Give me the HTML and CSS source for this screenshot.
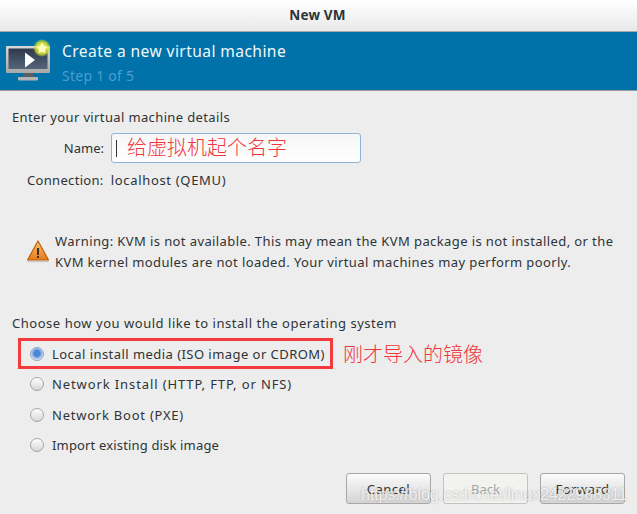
FILE: index.html
```html
<!DOCTYPE html>
<html lang="en">
<head>
<meta charset="utf-8">
<title>New VM</title>
<link rel="stylesheet" href="styles.css">
</head>
<body>
<div class="window">
  <header class="titlebar">New VM</header>
  <section class="banner">
    <svg class="vm-icon" width="50" height="50" viewBox="0 0 50 50">
      <defs>
        <radialGradient id="glow"><stop offset="0.35" stop-color="#f4f34a"/><stop offset="0.75" stop-color="#d5e02c" stop-opacity="0.75"/><stop offset="1" stop-color="#c8dc30" stop-opacity="0"/></radialGradient>
        <linearGradient id="screen" x1="0" y1="0" x2="0" y2="1"><stop offset="0" stop-color="#2d3a4b"/><stop offset="1" stop-color="#56657a"/></linearGradient>
        <linearGradient id="bezel" x1="0" y1="0" x2="0" y2="1"><stop offset="0" stop-color="#d8d8d6"/><stop offset="1" stop-color="#a9a9a7"/></linearGradient>
      </defs>
      <rect x="6" y="14" width="44" height="27" rx="1" fill="url(#bezel)"/>
      <rect x="8.5" y="16.5" width="39" height="20.5" fill="url(#screen)"/>
      <rect x="23" y="41" width="10" height="4" fill="#5c5f60"/>
      <rect x="18" y="45" width="20" height="3.5" rx="1" fill="#b4b4b2"/>
      <path d="M25 20.5 L35 28 L25 35.5 Z" fill="#fff"/>
      <circle cx="42" cy="16" r="9" fill="url(#glow)"/>
      <path d="M42 10.5 l1.8 3.7 4 .5 -3 2.8 .8 4 -3.6 -2 -3.6 2 .8 -4 -3 -2.8 4 -.5 Z" fill="#fff9c8"/>
    </svg>
    <div class="banner-text">
      <div class="banner-title">Create a new virtual machine</div>
      <div class="banner-step">Step 1 of 5</div>
    </div>
  </section>
  <main class="content">
    <div class="heading">Enter your virtual machine details</div>
    <div class="name-row">
      <label class="name-label">Name:</label>
      <div class="name-input"><span class="caret"></span><span class="note note-name">给虚拟机起个名字</span></div>
    </div>
    <div class="conn-row"><span class="conn-label">Connection:</span><span class="conn-value">localhost (QEMU)</span></div>
    <div class="warning">
      <svg class="warn-icon" width="24" height="24" viewBox="0 0 24 24">
        <defs><linearGradient id="warn" x1="0" y1="0" x2="0" y2="1"><stop offset="0" stop-color="#fbc26a"/><stop offset="1" stop-color="#e8791a"/></linearGradient></defs>
        <path d="M1.5 22.5 H22.5" stroke="#c9c9c9" stroke-width="1.5"/>
        <path d="M12 2 L22.5 21 H1.5 Z" fill="url(#warn)" stroke="#b9600f" stroke-width="1.2" stroke-linejoin="round"/>
        <rect x="11" y="9" width="2" height="7" fill="#3a3128"/>
        <rect x="11" y="17" width="2" height="2" fill="#3a3128"/>
      </svg>
      <p class="warn-text">Warning: KVM is not available. This may mean the KVM package is not installed, or the<br>KVM kernel modules are not loaded. Your virtual machines may perform poorly.</p>
    </div>
    <div class="heading choose">Choose how you would like to install the operating system</div>
    <div class="options">
      <div class="selected-line">
        <div class="option selected"><span class="radio on"></span>Local install media (ISO image or CDROM)</div>
        <span class="note note-media">刚才导入的镜像</span>
      </div>
      <div class="option opt-network"><span class="radio"></span>Network Install (HTTP, FTP, or NFS)</div>
      <div class="option opt-boot"><span class="radio"></span>Network Boot (PXE)</div>
      <div class="option opt-import"><span class="radio"></span>Import existing disk image</div>
    </div>
  </main>
  <footer class="buttons">
    <button class="btn">Cancel</button>
    <button class="btn disabled">Back</button>
    <button class="btn">Forward</button>
  </footer>
  <div class="watermark">https://blog.csdn.net/linux2422988311</div>
</div>
</body>
</html>
```
FILE: styles.css
```css
* { box-sizing: border-box; }
html, body { margin: 0; padding: 0; }
body {
  width: 637px;
  height: 514px;
  overflow: hidden;
  font-family: "Noto Sans", "Open Sans", sans-serif;
  font-size: 13px;
  letter-spacing: 0.4px;
  color: #2e3436;
  background: #ededed;
}
.window {
  position: relative;
  width: 637px;
  height: 514px;
  display: flex;
  flex-direction: column;
}
.titlebar {
  height: 32px;
  flex: none;
  display: flex;
  align-items: center;
  justify-content: center;
  padding: 0 2px 2px 0;
  font-weight: 700;
  font-size: 13.5px;
  letter-spacing: 0.2px;
  color: #2e3436;
  background: linear-gradient(#ffffff, #e9e9e9);
  border-bottom: 1px solid #a9a9a9;
}
.banner {
  height: 59px;
  flex: none;
  display: flex;
  align-items: center;
  background: #0071a9;
  border-bottom: 1px solid #9a9a9a;
}
.vm-icon { flex: none; margin-top: -9px; }
.banner-text { margin: 4px 0 0 12px; }
.banner-title { font-size: 15.6px; line-height: 21px; color: #f2f7fa; letter-spacing: 0.41px; }
.banner-step { font-size: 14px; line-height: 21px; margin-top: 3px; color: #4a9fd0; letter-spacing: 0.25px; }
.content {
  flex: 1;
  padding: 17px 0 0 12px;
}
.heading { line-height: 18px; letter-spacing: 0.37px; }
.name-row {
  display: flex;
  align-items: center;
  height: 30px;
  margin-top: 7px;
}
.name-label { width: 92px; text-align: right; letter-spacing: 0; }
.name-input {
  width: 250px;
  height: 30px;
  margin-left: 7px;
  display: flex;
  align-items: center;
  padding-left: 4px;
  background: linear-gradient(#f7f7f7, #ffffff);
  border: 1px solid #8fb4dc;
  border-radius: 3px;
}
.caret { width: 1px; height: 17px; background: #2e3436; }
.note {
  color: #f0363a;
  font-family: "Noto Sans CJK SC", sans-serif;
  font-size: 20px;
  font-weight: 300;
  letter-spacing: 0;
}
.note-name { margin-left: 10px; line-height: 28px; margin-top: -2px; }
.conn-row {
  display: flex;
  gap: 7px;
  margin: 8px 0 0 15px;
  line-height: 18px;
}
.conn-label { letter-spacing: 0.32px; }
.conn-value { letter-spacing: 0.68px; }
.warning {
  display: flex;
  margin: 42px 0 0 14px;
}
.warn-icon { flex: none; margin-top: 8px; }
.warn-text { margin: 0 0 0 5px; line-height: 21px; white-space: nowrap; }
.heading.choose { margin-top: 41px; letter-spacing: 0.53px; }
.options { margin-top: 6px; padding-left: 6px; }
.selected-line { display: flex; align-items: center; height: 31px; }
.option {
  display: flex;
  align-items: center;
  height: 30.5px;
  padding-left: 12px;
  white-space: nowrap;
}
.selected {
  width: 315px;
  height: 31px;
  flex: none;
  border: 3px solid #f43a3d;
  padding-left: 9px;
  letter-spacing: 0.45px;
}
.opt-network { letter-spacing: 0.89px; }
.opt-boot { letter-spacing: 0.77px; }
.opt-import { letter-spacing: 0.16px; }
.radio {
  width: 14px;
  height: 14px;
  flex: none;
  margin-right: 8px;
  border-radius: 50%;
  border: 1px solid #a5a5a3;
  background: linear-gradient(#ffffff, #d6d6d4);
}
.radio.on {
  border-color: #8fa5c4;
  background: radial-gradient(circle at 50% 45%, #4a86d8 0 3px, #8ab2e4 4.5px, #e2e7ee 6.5px);
}
.note-media { margin-left: 10px; }
.buttons {
  flex: none;
  display: flex;
  justify-content: flex-end;
  gap: 12px;
  padding: 0 12px 10px 0;
}
.btn {
  width: 85px;
  height: 31px;
  font: inherit;
  letter-spacing: 0.47px;
  color: #2e3436;
  background: linear-gradient(#fbfbfb, #d4d4d4);
  border: 1px solid #a8a8a8;
  border-radius: 3px;
  padding: 0;
}
.btn.disabled {
  color: #a4a6a6;
  letter-spacing: 0;
  background: #f2f2f0;
  border-color: #c2c2c0;
}
.watermark {
  position: absolute;
  left: 361px;
  top: 486px;
  font-family: "Liberation Sans", sans-serif;
  font-size: 16px;
  letter-spacing: -0.06px;
  color: rgba(255, 255, 255, 0.8);
  text-shadow: 0 0 2px rgba(120, 120, 120, 0.6);
  white-space: nowrap;
}
```
